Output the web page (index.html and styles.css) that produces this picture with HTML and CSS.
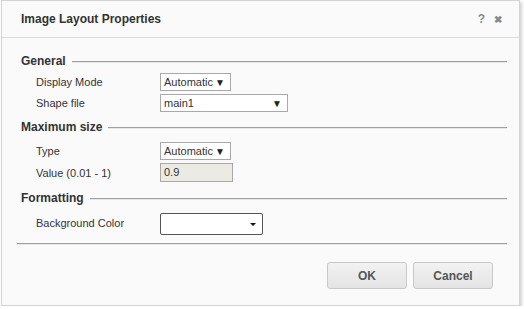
FILE: index.html
```html
<!doctype html>
<html>
<head>
    <meta charset="utf-8">
    <title>Image Layout Properties</title>
    <link rel="stylesheet" href="styles.css">
</head>
<body>

<div class="dialog">
    <div class="dialog-header">
        <span class="dialog-title">Image Layout Properties</span>
        <span class="header-tools">
            <span class="tool">?</span>
            <span class="tool close">&#x2716;</span>
        </span>
    </div>

    <div class="dialog-body">
        <div class="legend"><span>General</span></div>
        <div class="form-grid">
            <label>Display Mode</label>
            <div class="select small"><span>Automatic</span><span class="arrow">&#x25BC;</span></div>
            <label>Shape file</label>
            <div class="select wide"><span>main1</span><span class="arrow">&#x25BC;</span></div>
        </div>

        <div class="legend"><span>Maximum size</span></div>
        <div class="form-grid size-grid">
            <label>Type</label>
            <div class="select small"><span>Automatic</span><span class="arrow">&#x25BC;</span></div>
            <label>Value (0.01 - 1)</label>
            <div class="input disabled">0.9</div>
        </div>

        <div class="legend"><span>Formatting</span></div>
        <div class="form-grid">
            <label>Background Color</label>
            <div class="color-picker"><span class="caret"></span></div>
        </div>

        <div class="separator"></div>
    </div>

    <div class="dialog-footer">
        <button class="btn">OK</button>
        <button class="btn">Cancel</button>
    </div>
</div>

</body>
</html>
```

FILE: styles.css
```css
html, body {
    margin: 0;
    padding: 0;
    background: #ffffff;
}
body {
    font-family: "Liberation Sans", Arial, sans-serif;
    font-size: 11px;
    color: #333;
}

.dialog {
    width: 519px;
    height: 306px;
    box-sizing: border-box;
    margin-left: 1px;
    background: #fafafa;
    border: 1px solid #d4d4d4;
    box-shadow: 2px 2px 3px rgba(0, 0, 0, 0.18);
    display: flex;
    flex-direction: column;
}

.dialog-header {
    height: 36px;
    border-bottom: 1px solid #dcdcdc;
    display: flex;
    align-items: center;
    justify-content: space-between;
    padding: 0 17px 0 19px;
}
.dialog-title {
    font-weight: bold;
    font-size: 12px;
    color: #333;
}
.header-tools {
    display: flex;
    align-items: center;
    gap: 9px;
    color: #8a8a8a;
    font-weight: bold;
    font-size: 12px;
}
.tool.close {
    font-size: 10px;
}

.dialog-body {
    padding: 14px 12px 0 14px;
}

.legend {
    display: flex;
    align-items: center;
    height: 18px;
    padding-left: 5px;
    font-weight: bold;
    font-size: 12px;
}
.legend::after {
    content: "";
    flex: 1;
    height: 1px;
    background: #a0a0a0;
    box-shadow: 0 1px 0 #e6e6e6;
    margin-left: 6px;
}

.form-grid {
    display: grid;
    grid-template-columns: 124px auto;
    row-gap: 3px;
    padding: 3px 0 6px 20px;
    align-items: center;
    justify-items: start;
}
.size-grid {
    padding-top: 6px;
    row-gap: 3px;
    padding-bottom: 7px;
}

.select {
    height: 18px;
    box-sizing: border-box;
    background: #fff;
    border: 1px solid #a9a9a9;
    display: flex;
    align-items: center;
    justify-content: space-between;
    padding: 0 5px 0 3px;
    font-size: 11px;
}
.select.small {
    width: 71px;
}
.select.wide {
    width: 128px;
}
.select .arrow {
    font-size: 10px;
    color: #222;
}

.input {
    width: 73px;
    height: 19px;
    box-sizing: border-box;
    border: 1px solid #a9a9a9;
    padding: 2px 3px;
    font-size: 11px;
}
.input.disabled {
    background: #ebebe4;
}

.color-picker {
    width: 103px;
    height: 22px;
    box-sizing: border-box;
    background: #fff;
    border: 1px solid #555;
    border-radius: 2px;
    margin: 3px 0 0;
    position: relative;
}
.color-picker .caret {
    position: absolute;
    right: 6px;
    top: 9px;
    border-left: 3px solid transparent;
    border-right: 3px solid transparent;
    border-top: 3px solid #111;
}

.separator {
    height: 1px;
    background: #a0a0a0;
    box-shadow: 0 1px 0 #e6e6e6;
    margin: 2px 0 0 1px;
}

.dialog-footer {
    display: flex;
    justify-content: flex-end;
    gap: 6px;
    padding: 18px 26px 0 0;
}
.btn {
    width: 80px;
    height: 27px;
    border: 1px solid #c9c9c9;
    border-radius: 3px;
    background: linear-gradient(#f2f2f2, #e4e4e4);
    font-family: "Liberation Sans", Arial, sans-serif;
    font-weight: bold;
    font-size: 12px;
    color: #555;
}
```
